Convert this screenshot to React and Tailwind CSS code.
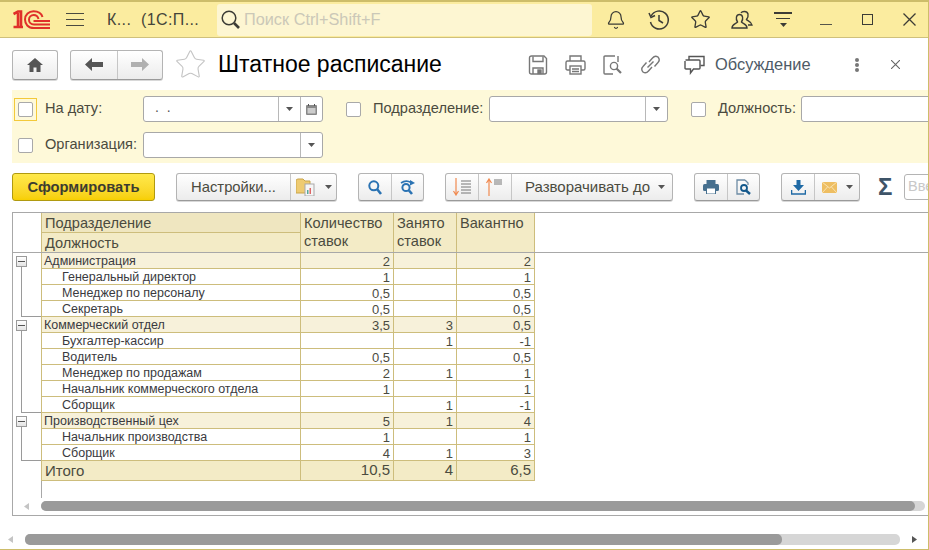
import React from "react";
import { Bell, Star } from "lucide-react";

const rows = [
  { name: "Администрация", group: true, a: "2", b: "", c: "2" },
  { name: "Генеральный директор", a: "1", b: "", c: "1" },
  { name: "Менеджер по персоналу", a: "0,5", b: "", c: "0,5" },
  { name: "Секретарь", last: true, a: "0,5", b: "", c: "0,5" },
  { name: "Коммерческий отдел", group: true, a: "3,5", b: "3", c: "0,5" },
  { name: "Бухгалтер-кассир", a: "", b: "1", c: "-1" },
  { name: "Водитель", a: "0,5", b: "", c: "0,5" },
  { name: "Менеджер по продажам", a: "2", b: "1", c: "1" },
  { name: "Начальник коммерческого отдела", a: "1", b: "", c: "1" },
  { name: "Сборщик", last: true, a: "", b: "1", c: "-1" },
  { name: "Производственный цех", group: true, a: "5", b: "1", c: "4" },
  { name: "Начальник производства", a: "1", b: "", c: "1" },
  { name: "Сборщик", last: true, a: "4", b: "1", c: "3" },
];

// small drawn icons
const Logo = () => (
  <svg width="38" height="20" viewBox="0 0 38 20" fill="none" stroke="#e0302a">
    <path d="M0.5 4 L5 1.5 H8 V16.5 M0.5 17 H10 M5 3 V16.5" strokeWidth="2.6" />
    <path d="M37 18 H21 C15 18 12 14 12 9.5 C12 4.5 16 1.2 20.5 1.2 C25.5 1.2 28.5 3.5 29.5 7" strokeWidth="2" />
    <path d="M37 14.5 H21 C18 14.5 16 12.5 16 9.7 C16 7 18 5 20.7 5 C23 5 24.8 6.2 25.5 9" strokeWidth="2" />
    <path d="M37 11 H20.5" strokeWidth="2" />
  </svg>
);

const Caret = ({ color = "#555" }) => (
  <svg width="7" height="4" viewBox="0 0 7 4"><path d="M0 0 H7 L3.5 4 Z" fill={color} /></svg>
);

const Check = () => (
  <span className="block w-[15px] h-[15px] bg-white border border-[#a9a9a9] rounded-[2px]" />
);

const Label = ({ children, className }) => (
  <span className={"shrink-0 text-[14.6px] text-[#4b4b3f] whitespace-nowrap " + className}>{children}</span>
);

const Btn = ({ className, children }) => (
  <div className={"flex h-[28px] shrink-0 border border-[#b4b4b4] border-b-[#9a9a9a] rounded-[3px] bg-linear-to-b from-white to-[#ececec] shadow-[0_1px_0_#d8d8d8] " + className}>
    {children}
  </div>
);

const Seg = ({ className, children }) => (
  <div className={"flex items-center justify-center border-r border-[#c6c6c6] last:border-r-0 " + className}>{children}</div>
);

const Field = ({ className, children }) => (
  <div className={"flex h-[26px] shrink-0 bg-white border border-[#a8a8a8] rounded-[3px] " + className}>{children}</div>
);

const Drop = () => (
  <div className="flex w-[22px] items-center justify-center border-l border-[#b8b8b8]"><Caret /></div>
);

const TitleBar = () => (
  <div className="flex items-center h-[38px] bg-[#fbec9f] border-t-2 border-b border-t-[#cdbd6a] border-b-[#cfc07c]">
    <div className="ml-[13px] w-[37px]"><Logo /></div>
    <div className="ml-[16px] flex flex-col gap-[5px] w-[18px]">
      <span className="h-px bg-[#4a4a40]" /><span className="h-px bg-[#4a4a40]" /><span className="h-px bg-[#4a4a40]" />
    </div>
    <span className="ml-[23px] w-[110px] text-[16px] tracking-[0.4px] text-[#45453a] whitespace-pre">К...  (1С:П...</span>
    <div className="flex items-center h-[32px] w-[375px] bg-[#fdf6d2] rounded-[3px]">
      <svg className="ml-[3px]" width="21" height="21" viewBox="0 0 21 21" fill="none" stroke="#3c3c36" strokeWidth="1.5">
        <circle cx="9" cy="9" r="6.8" /><path d="M14 14 L19 19" strokeWidth="2.6" />
      </svg>
      <span className="ml-[3px] text-[16.3px] text-[#cbc8b8]">Поиск Ctrl+Shift+F</span>
    </div>
    <Bell className="ml-[14px]" size={20} strokeWidth={1.5} color="#3c3c36" />
    <svg className="ml-[22px]" width="22" height="22" viewBox="0 0 22 22" fill="none" stroke="#3c3c36" strokeWidth="1.5">
      <path d="M3.2 7 A9 9 0 1 1 2.5 13" /><path d="M1 4 L3 8.5 L7 6.5" /><path d="M11 6 V11.5 L15 14" />
    </svg>
    <Star className="ml-[20px]" size={21} strokeWidth={1.5} color="#3c3c36" />
    <svg className="ml-[20px]" width="22" height="20" viewBox="0 0 22 20" fill="none" stroke="#3c3c36" strokeWidth="1.4">
      <path d="M1 18 C1 14 5 14 6.5 12 C4.5 9 5 4.5 8.5 4.5 C12 4.5 12.5 9 10.5 12 C12 14 16 14 16 18 Z" />
      <path d="M10 3 C11 1 16 0.5 17 4 C17.5 6 16.5 8 15.5 9.5 C16.5 11 20.5 11.5 21 15 L17 15" />
    </svg>
    <div className="ml-[21px] flex flex-col items-center w-[18px] gap-[4px]">
      <span className="h-[1.5px] w-[18px] bg-[#3c3c36]" />
      <span className="h-[1.5px] w-[14px] bg-[#3c3c36]" />
      <Caret color="#3c3c36" />
    </div>
    <span className="ml-[28px] self-end mb-[12px] h-[1.5px] w-[12px] bg-[#55554a]" />
    <span className="ml-[30px] w-[11px] h-[11px] border-[1.5px] border-[#3c3c36]" />
    <svg className="ml-[30px]" width="13" height="13" viewBox="0 0 13 13" stroke="#3c3c36" strokeWidth="1.3"><path d="M0.5 0.5 L12.5 12.5 M12.5 0.5 L0.5 12.5" /></svg>
  </div>
);

const Header = () => (
  <div className="flex items-center h-[52px] pl-[12px] pt-[1px]">
    <Btn className="w-[46px] h-[30px] items-center justify-center">
      <svg width="16" height="14" viewBox="0 0 16 14" fill="#555"><path d="M8 0 L16 7 H13.5 V14 H9.5 V9.5 H6.5 V14 H2.5 V7 H0 Z" /></svg>
    </Btn>
    <Btn className="ml-[12px] w-[93px] h-[30px]">
      <Seg className="w-[47px]">
        <svg width="18" height="13" viewBox="0 0 18 13" fill="#555"><path d="M0 6.5 L7 0 V4 H18 V9 H7 V13 Z" /></svg>
      </Seg>
      <Seg className="flex-1">
        <svg width="18" height="13" viewBox="0 0 18 13" fill="#b0b0b0"><path d="M18 6.5 L11 0 V4 H0 V9 H11 V13 Z" /></svg>
      </Seg>
    </Btn>
    <Star className="ml-[11px]" size={33} strokeWidth={0.8} color="#c4c4c4" />
    <span className="ml-[11px] w-[310px] text-[23px] text-black whitespace-nowrap">Штатное расписание</span>
    <svg width="20" height="20" viewBox="0 0 20 20" fill="none" stroke="#777" strokeWidth="1.4">
      <path d="M1.5 3 Q1.5 1 3.5 1 H16 L18.5 3.5 V17 Q18.5 19 16.5 19 H3.5 Q1.5 19 1.5 17 Z" /><path d="M5 1.5 V6.5 H15 V1.5 M5 19 V13 H15 V19" /><rect x="10" y="15" width="3" height="3.5" fill="#777" />
    </svg>
    <svg className="ml-[17px]" width="21" height="20" viewBox="0 0 21 20" fill="none" stroke="#777" strokeWidth="1.4">
      <path d="M5 6 V1 H16 V6 M5 15 H2.5 Q1 15 1 13.5 V7.5 Q1 6 2.5 6 H18.5 Q20 6 20 7.5 V13.5 Q20 15 18.5 15 H16" /><rect x="5" y="11" width="11" height="8" /><path d="M7 14 H14 M7 16.5 H14" />
    </svg>
    <svg className="ml-[17px]" width="20" height="20" viewBox="0 0 20 20" fill="none" stroke="#777" strokeWidth="1.4">
      <path d="M12 1 H2 Q1 1 1 2 V18 Q1 19 2 19 H10 M15 1 V7" /><circle cx="11" cy="11" r="3.6" /><path d="M13.5 13.5 L18 18" strokeWidth="2.2" />
    </svg>
    <svg className="ml-[17px]" width="21" height="21" viewBox="0 0 21 21" fill="none" stroke="#777" strokeWidth="1.4">
      <path d="M9 8 L12.5 4 Q15 1 18 3 Q20.5 6 18 8.5 L14.5 12.5" /><path d="M12 13 L8.5 17 Q6 20 3 18 Q0.5 15 3 12.5 L6.5 8.5" /><path d="M7.5 13.5 L13.5 7.5" />
    </svg>
    <svg className="ml-[23px]" width="21" height="20" viewBox="0 0 21 20" fill="none" stroke="#555" strokeWidth="1.4">
      <path d="M1.5 5 H15 Q16 5 16 6 V13 Q16 14 15 14 H9.5 L6.5 18 V14 H2 Q1 14 1 13 V6" /><path d="M5 5 V1.5 H20 V10.5 H16.5" />
    </svg>
    <span className="ml-[10px] w-[96px] text-[16.4px] text-[#4e5a66] whitespace-nowrap">Обсуждение</span>
    <div className="ml-[44px] flex flex-col gap-[1px] w-[4px]">
      <span className="w-[4px] h-[4px] rounded-full bg-[#777]" /><span className="w-[4px] h-[4px] rounded-full bg-[#777]" /><span className="w-[4px] h-[4px] rounded-full bg-[#777]" />
    </div>
    <svg className="ml-[32px]" width="9" height="9" viewBox="0 0 9 9" stroke="#666" strokeWidth="1.1"><path d="M0 0 L9 9 M9 0 L0 9" /></svg>
  </div>
);

const Filters = () => (
  <div className="ml-[12px] h-[73px] bg-[#fef9d9] pt-[6px] overflow-hidden">
    <div className="flex items-center h-[26px]">
      <div className="ml-[2px] w-[23px] h-[23px] shrink-0 flex items-center justify-center border border-[#f3c93a]"><Check /></div>
      <Label className="ml-[8px] w-[98px]">На дату:</Label>
      <Field className="w-[180px]">
        <span className="w-[134px] pl-[11px] text-[14px] text-[#555] whitespace-pre">.  .</span>
        <Drop />
        <div className="flex flex-1 items-center justify-center border-l border-[#b8b8b8]">
          <svg width="11" height="11" viewBox="0 0 11 11"><rect y="1" width="11" height="10" rx="1" fill="#888" /><rect x="1.5" y="4" width="8" height="5.5" fill="#ccc" /><path d="M2.5 0 V2 M8.5 0 V2" stroke="#555" /></svg>
        </div>
      </Field>
      <div className="ml-[23px] shrink-0"><Check /></div>
      <Label className="ml-[12px] w-[116px]">Подразделение:</Label>
      <Field className="w-[179px] justify-end"><Drop /></Field>
      <div className="ml-[23px] shrink-0"><Check /></div>
      <Label className="ml-[12px] w-[83px]">Должность:</Label>
      <Field className="w-[200px]" />
    </div>
    <div className="flex items-center h-[26px] mt-[10px]">
      <div className="ml-[6px] shrink-0"><Check /></div>
      <Label className="ml-[12px] w-[98px]">Организация:</Label>
      <Field className="w-[180px] justify-end"><Drop /></Field>
    </div>
  </div>
);

const CommandBar = () => (
  <div className="flex items-start h-[29px] mt-[10px] ml-[12px] overflow-hidden">
    <div className="flex items-center justify-center w-[143px] h-[28px] shrink-0 rounded-[3px] border border-[#b09a10] bg-linear-to-b from-[#ffe94a] to-[#f7cf00] text-[14.7px] font-bold text-[#3c3c30]">Сформировать</div>
    <Btn className="ml-[21px] w-[161px]">
      <Seg className="w-[114px] text-[14.8px] text-[#4b4b3f]">Настройки...</Seg>
      <Seg className="flex-1 gap-[9px]">
        <svg width="20" height="18" viewBox="0 0 20 18">
          <path d="M0 3 Q0 1 2 1 H7 L9 3 H14 V15 H0 Z" fill="#eecb72" stroke="#c9a54a" />
          <rect x="9" y="6" width="9" height="12" fill="#f6f6f6" stroke="#aaa" />
          <rect x="11" y="12" width="1.5" height="4" fill="#5a9" /><rect x="13.5" y="10" width="1.5" height="6" fill="#d66" />
        </svg>
        <Caret />
      </Seg>
    </Btn>
    <Btn className="ml-[21px] w-[66px]">
      <Seg className="w-[33px]">
        <svg width="14" height="15" viewBox="0 0 14 15" fill="none" stroke="#2b73b3" strokeWidth="2"><circle cx="5.8" cy="5.8" r="4.5" /><path d="M9 9 L13 14" strokeWidth="2.6" /></svg>
      </Seg>
      <Seg className="flex-1">
        <svg width="16" height="15" viewBox="0 0 16 15" fill="none" stroke="#2b73b3" strokeWidth="2"><circle cx="6" cy="7.5" r="3.6" /><path d="M9 10.5 L12 14" strokeWidth="2.6" /><path d="M1 3 Q6 -0.5 11 2.5" strokeWidth="1.6" /><path d="M10 0 L15 3 L10 5.5 Z" fill="#2b73b3" stroke="none" /></svg>
      </Seg>
    </Btn>
    <Btn className="ml-[21px] w-[228px]">
      <Seg className="w-[33px]">
        <svg width="20" height="18" viewBox="0 0 20 18">
          <path d="M4 0 V16 M1.5 13 L4 17 L6.5 13" fill="none" stroke="#f08a50" strokeWidth="1.2" />
          <path d="M9 3 H19 M9 6 H19 M9 9 H19 M9 12 H19 M9 15 H19" stroke="#777" />
        </svg>
      </Seg>
      <Seg className="w-[33px]">
        <svg width="20" height="18" viewBox="0 0 20 18">
          <path d="M4 18 V2 M1.5 5 L4 1 L6.5 5" fill="none" stroke="#f08a50" strokeWidth="1.2" />
          <path d="M9 2 H17 M9 4 H17 M9 6 H17" stroke="#777" />
        </svg>
      </Seg>
      <Seg className="flex-1 !justify-start pl-[13px] gap-[8px] text-[15px] text-[#4b4b3f] whitespace-nowrap">Разворачивать до <Caret /></Seg>
    </Btn>
    <Btn className="ml-[21px] w-[66px]">
      <Seg className="w-[33px]">
        <svg width="16" height="14" viewBox="0 0 16 14"><rect x="3.5" y="0" width="9" height="4" fill="#47708f" /><rect y="4" width="16" height="7" rx="1.5" fill="#47708f" /><rect x="3.5" y="8" width="9" height="6" fill="#fff" stroke="#47708f" /></svg>
      </Seg>
      <Seg className="flex-1">
        <svg width="15" height="16" viewBox="0 0 15 16" fill="none"><path d="M9 1 H1 V15 H8" stroke="#6d8ca5" strokeWidth="1.3" /><path d="M9 1 L12 4 V6" stroke="#6d8ca5" strokeWidth="1.3" /><circle cx="8" cy="9" r="3" stroke="#14598c" strokeWidth="1.8" /><path d="M10 11.5 L14 15" stroke="#14598c" strokeWidth="2.4" /></svg>
      </Seg>
    </Btn>
    <Btn className="ml-[21px] w-[79px]">
      <Seg className="w-[33px]">
        <svg width="15" height="15" viewBox="0 0 15 15" fill="#1f6aa5"><path d="M5.5 0 H9.5 V5 H13 L7.5 11 L2 5 H5.5 Z" /><path d="M0.5 10 V14 H14.5 V10" fill="none" stroke="#1f6aa5" strokeWidth="1.6" /></svg>
      </Seg>
      <Seg className="flex-1 gap-[9px]">
        <svg width="15" height="11" viewBox="0 0 15 11"><rect width="15" height="11" fill="#eebe62" /><path d="M0 0 L7.5 6 L15 0 M0 11 L5.5 5 M15 11 L9.5 5" fill="none" stroke="#f9e3b4" /></svg>
        <Caret />
      </Seg>
    </Btn>
    <span className="ml-[18px] w-[14px] shrink-0 mt-[1px] text-[24px] leading-[26px] font-bold text-[#3e5468]">Σ</span>
    <div className="ml-[12px] shrink-0 flex items-center w-[60px] h-[26px] mt-[1px] bg-white border border-[#b4b4b4] rounded-[3px] pl-[3px] text-[14.5px] text-[#c8c8c8]">Вве</div>
  </div>
);

const Gutter = ({ row }) => {
  if (row.group) {
    return (
      <div className="flex flex-col w-[28px] shrink-0 pl-[3px] pt-[3px]">
        <span className="flex items-center justify-center w-[11px] h-[11px] border border-[#9a9a9a] bg-linear-to-b from-white to-[#e4e4e4] shrink-0">
          <span className="w-[7px] h-px bg-[#555]" />
        </span>
        <span className="ml-[5px] w-px flex-1 bg-[#9a9a9a]" />
      </div>
    );
  }
  return (
    <div className="w-[28px] shrink-0 pl-[8px]">
      <div className={"h-full border-l border-[#9a9a9a] " + (row.last ? "border-b" : "")} />
    </div>
  );
};

const cell = "flex items-center justify-end pr-[3px] border-r border-b border-[#cdbd7c]";
const num = "pt-[2px] text-[13px] text-[#4b4b3f] ";

const Row = ({ row }) => (
  <div className="flex h-[16px] text-[12.5px] leading-[15px] text-[#3a3a40]">
    <Gutter row={row} />
    <div className={"flex items-center pt-[1px] w-[260px] border-l border-r border-b border-[#cdbd7c] whitespace-nowrap " + (row.group ? "pl-[2px] bg-[#f7f1da]" : "pl-[20px]")}>{row.name}</div>
    <div className={"w-[93px] " + num + cell + (row.group ? " bg-[#f7f1da]" : "")}>{row.a}</div>
    <div className={"w-[63px] " + num + cell + (row.group ? " bg-[#f7f1da]" : "")}>{row.b}</div>
    <div className={"w-[78px] " + num + cell + (row.group ? " bg-[#f7f1da]" : "")}>{row.c}</div>
  </div>
);

const ReportTable = () => (
  <div className="ml-[12px] mt-[10px] h-[304px] border-t border-l border-b border-[#a8a8a8] overflow-hidden">
    <div className="flex h-[40px] border-b border-[#a8a8a8] text-[14.6px] leading-[18px] text-[#4b4b3f]">
      <div className="w-[28px] shrink-0" />
      <div className="flex flex-col w-[260px] border-l border-r border-[#cdbd7c] bg-[#f3ebc6]">
        <div className="h-[20px] pl-[3px] pt-[1px] border-b border-[#cdbd7c] bg-[#efe6c0]">Подразделение</div>
        <div className="flex-1 pl-[3px] pt-[1px]">Должность</div>
      </div>
      <div className="w-[93px] pl-[3px] pt-[1px] bg-[#f3ebc6] border-r border-[#cdbd7c]">Количество<br />ставок</div>
      <div className="w-[63px] pl-[3px] pt-[1px] bg-[#f3ebc6] border-r border-[#cdbd7c]">Занято<br />ставок</div>
      <div className="w-[78px] pl-[3px] pt-[1px] bg-[#f3ebc6] border-r border-[#cdbd7c]">Вакантно</div>
    </div>
    {rows.map((r, i) => <Row key={i} row={r} />)}
    <div className="flex h-[20px] text-[15px] text-[#4b4b3f]">
      <div className="w-[28px] shrink-0" />
      <div className="w-[260px] pl-[3px] leading-[19px] bg-[#f3ebc6] border-l border-r border-b border-[#cdbd7c]">Итого</div>
      <div className={"w-[93px] bg-[#f3ebc6] " + cell}>10,5</div>
      <div className={"w-[63px] bg-[#f3ebc6] " + cell}>4</div>
      <div className={"w-[78px] bg-[#f3ebc6] " + cell}>6,5</div>
    </div>
    <div className="ml-[28px] h-[17px] border-l border-[#a8a8a8]" />
    <div className="flex items-center h-[10px] mt-[3px]">
      <svg className="ml-[11px]" width="5" height="7" viewBox="0 0 5 7"><path d="M5 0 V7 L0 3.5 Z" fill="#c4c4c4" /></svg>
      <div className="ml-[12px] w-[884px] h-[10px] rounded-[5px] bg-[#d6d6d6]">
        <div className="w-[874px] h-full rounded-[5px] bg-[#9a9a9a]" />
      </div>
    </div>
  </div>
);

const BottomScroll = () => (
  <div className="flex items-center h-[11px] mt-[18px]">
    <svg className="ml-[8px]" width="5" height="7" viewBox="0 0 5 7"><path d="M5 0 V7 L0 3.5 Z" fill="#c4c4c4" /></svg>
    <div className="ml-[12px] w-[875px] h-[11px] rounded-[5px] bg-[#d6d6d6]">
      <div className="w-[757px] h-full rounded-[5px] bg-[#9a9a9a]" />
    </div>
    <svg className="ml-[12px]" width="5" height="7" viewBox="0 0 5 7"><path d="M0 0 V7 L5 3.5 Z" fill="#555" /></svg>
  </div>
);

export default function App() {
  return (
    <div className="w-[929px] h-[550px] bg-white overflow-hidden border-r border-b border-[#cdbd6a] font-['Liberation_Sans',Arial,sans-serif]">
      <TitleBar />
      <Header />
      <Filters />
      <CommandBar />
      <ReportTable />
      <BottomScroll />
    </div>
  );
}
